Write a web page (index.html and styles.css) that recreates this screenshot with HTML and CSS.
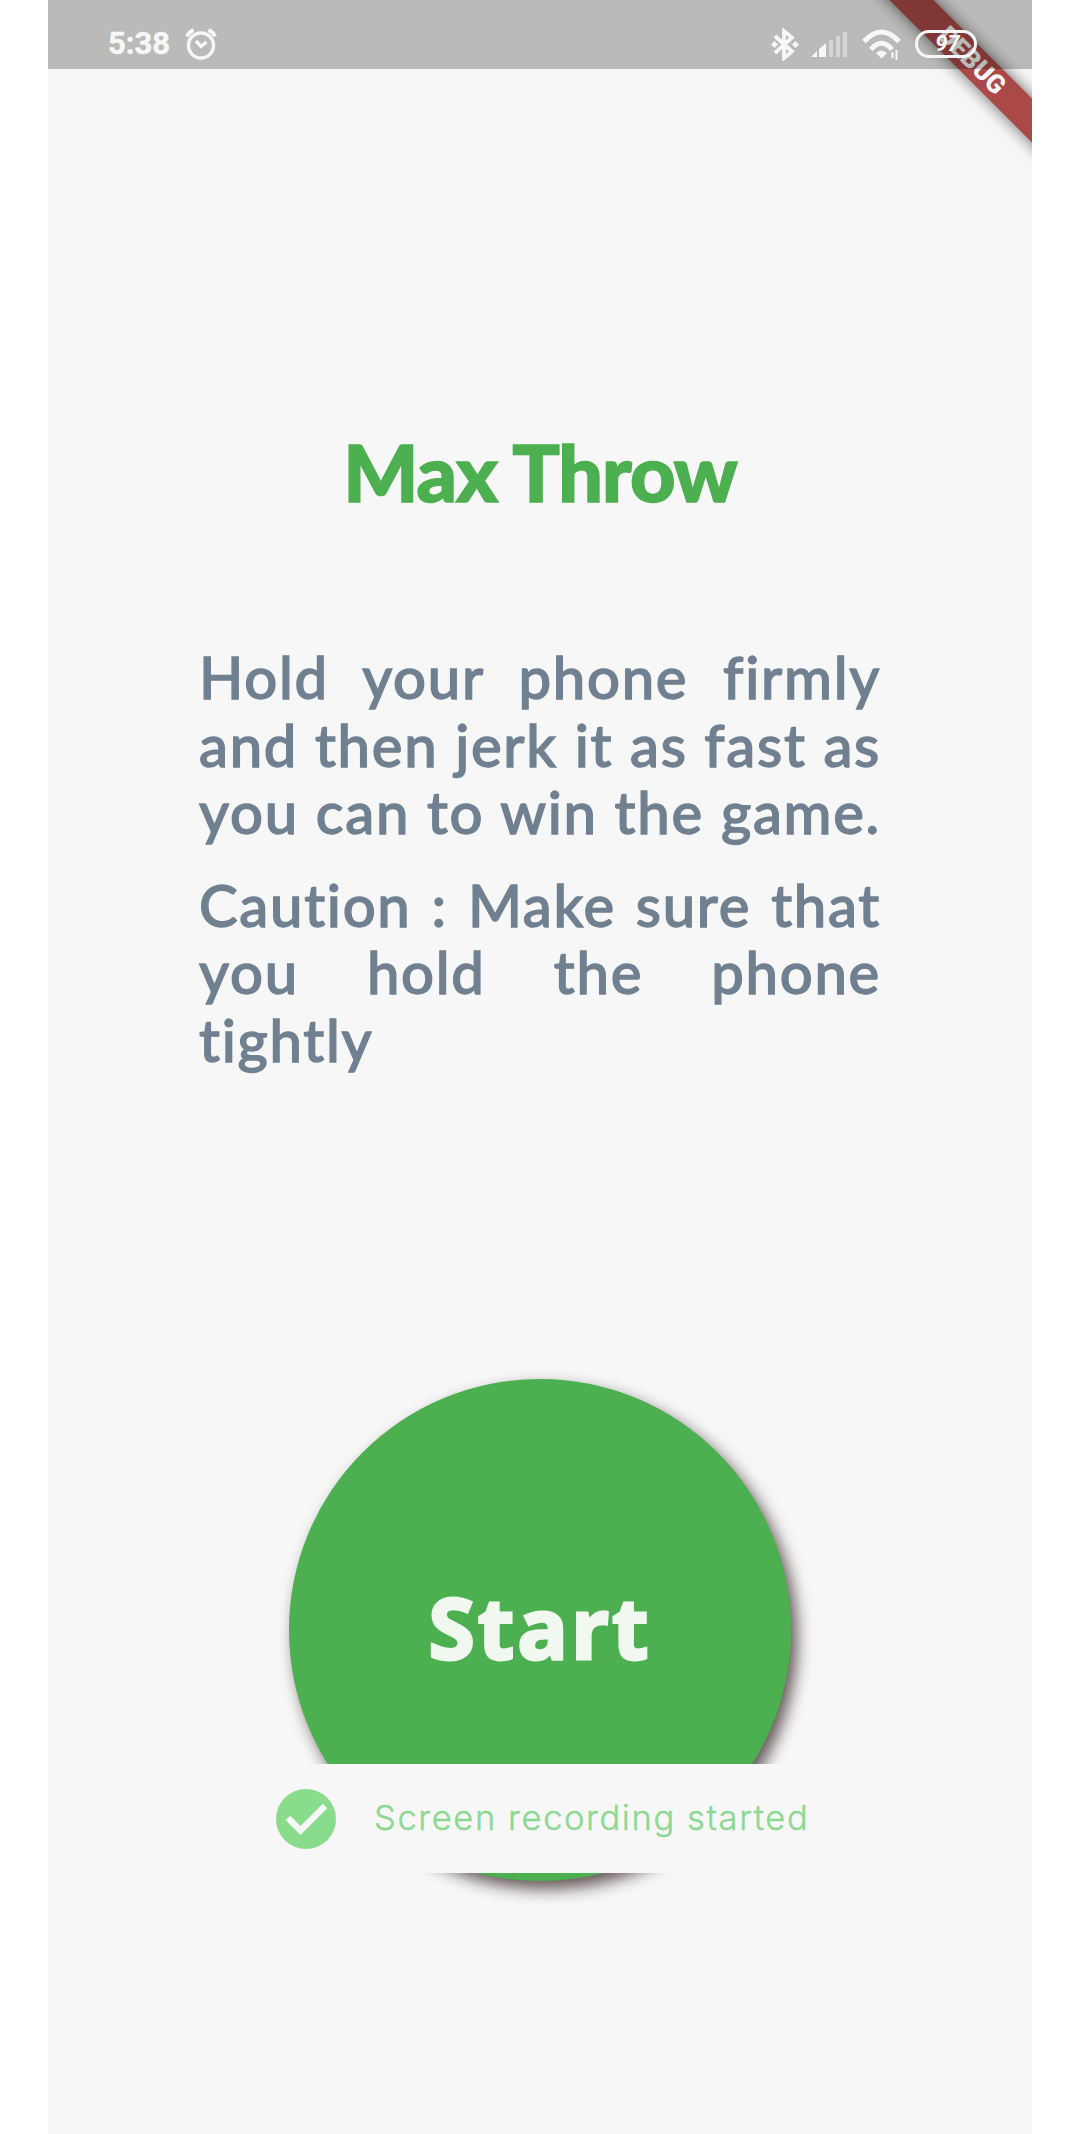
FILE: index.html
```html
<!DOCTYPE html>
<html lang="en">
<head>
<meta charset="utf-8">
<title>Max Throw</title>
<link rel="stylesheet" href="styles.css">
</head>
<body>
<main class="phone">
  <div class="debug-corner"><div class="debug-banner">DEBUG</div></div>
  <header class="status-bar">
    <div class="status-left">
      <span class="clock">5:38</span>
      <svg class="alarm" viewBox="0 0 32 32" fill="none" stroke="#f7f7f7">
        <circle cx="16" cy="17.5" r="12.5" stroke-width="3.400"/>
        <path d="M2 8.500Q4 4 8.500 2M30 8.500Q28 4 23.500 2" stroke-width="4"/>
        <path d="M11 13L16 18.500L21.500 14" stroke-width="3.400"/>
      </svg>
    </div>
    <div class="status-right">
      <svg class="bluetooth" viewBox="0 0 28 33" fill="none" stroke="#f7f7f7">
        <path d="M4 8L21 23.500L13 30V3L21 9.500L4 25" stroke-width="3.800"/>
        <path d="M0 16.500L3.500 13L7 16.500L3.500 20ZM21 16.500L24.500 13L28 16.500L24.500 20Z" fill="#f7f7f7" stroke="none"/>
      </svg>
      <svg class="signal" viewBox="0 0 38 27" fill="#f7f7f7">
        <path d="M0 26L6 20V26ZM8 18L15 12V26H8Z"/>
        <path d="M18 9H22V26H18ZM25 5H29V26H25ZM32 1H36V26H32Z" opacity=".45"/>
      </svg>
      <svg class="wifi" viewBox="0 0 40 31" fill="none" stroke="#f7f7f7" stroke-width="5">
        <path d="M2 12.500Q19.500 -6.500 37 12.500M9 20.500Q19.500 8 30 20.500"/>
        <path d="M14 24Q19.500 19 25 24L19.500 29.500Z" fill="#f7f7f7" stroke="none"/>
        <path d="M30.500 23V29M34.500 21V31" stroke-width="2"/>
      </svg>
      <div class="battery">97</div>
    </div>
  </header>
  <section class="intro">
    <h1><span>Max Throw</span></h1>
    <p><span class="line">Hold your phone firmly</span><span class="line">and then jerk it as fast as</span><span class="line">you can to win the game.</span></p>
    <p><span class="line">Caution : Make sure that</span><span class="line">you hold the phone</span><span class="line last">tightly</span></p>
  </section>
  <button class="start"><span>Start</span></button>
  <div class="toast">
    <svg class="check" viewBox="0 0 60 60"><circle cx="30" cy="30" r="30" fill="#88dc8b"/><path d="M12 29L24.500 41.500L49 17" fill="none" stroke="#f7f7f7" stroke-width="6.500"/></svg>
    <span>Screen recording started</span>
  </div>
</main>
</body>
</html>
```
FILE: styles.css
```css
* { box-sizing: border-box; }
body { margin: 0; background: #fff; }
.phone {
  position: relative;
  width: 984px;
  height: 2134px;
  margin: 0 auto;
  overflow: hidden;
  background: #f7f7f7;
  font-family: Lato, "Open Sans", sans-serif;
}
.status-bar {
  position: relative;
  display: flex;
  justify-content: space-between;
  height: 69px;
  padding: 0 55px 0 60px;
  background: rgba(5, 3, 0, .25);
  color: #f7f7f7;
}
.status-left, .status-right { display: flex; align-items: center; padding-top: 19px; }
.clock { width: 77px; font: 700 31px/32px Roboto, sans-serif; -webkit-text-stroke: .5px #f7f7f7; }
.alarm { width: 32px; height: 32px; }
.bluetooth { width: 28px; height: 33px; margin-right: 12px; }
.signal { width: 38px; height: 27px; margin-right: 13px; }
.wifi { width: 40px; height: 31px; margin-right: 13px; }
.battery {
  width: 62px;
  height: 28px;
  padding-left: 3px;
  border: 3px solid #f7f7f7;
  border-radius: 14px;
  font: italic 700 22px/22px Roboto, sans-serif;
  text-align: center;
}
.debug-corner { position: absolute; top: 0; right: 0; width: 200px; height: 200px; overflow: hidden; }
.debug-banner {
  position: absolute;
  left: 19px;
  top: 44.500px;
  width: 242px;
  height: 31px;
  transform: rotate(45deg);
  background: #ab4848;
  box-shadow: 0 0 16px rgba(0, 0, 0, .6);
  color: #f7f7f7;
  font: 900 26px/31px Roboto, sans-serif;
  text-align: center;
}
.intro { display: flex; flex-direction: column; padding: 353px 151px 0; }
h1 {
  margin: 0 0 121px;
  color: #4caf50;
  font-size: 79px;
  font-weight: 900;
  line-height: 100px;
  letter-spacing: -1px;
  text-align: center;
  white-space: nowrap;
  -webkit-text-stroke: 1.500px #4caf50;
}
p {
  margin: 0 0 25px;
  color: #708090;
  font-size: 58px;
  font-weight: 500;
  line-height: 67.500px;
  letter-spacing: 1.700px;
  -webkit-text-stroke: 1.300px #708090;
}
.line { display: block; text-align-last: justify; white-space: nowrap; }
.last { text-align-last: left; }
.start {
  display: block;
  width: 502px;
  height: 502px;
  margin: 281px auto 0;
  padding: 0 0 6px;
  border: 0;
  border-radius: 50%;
  background: #4caf50;
  box-shadow: 6px 8px 16px rgba(20, 0, 0, .65);
  color: #f0f8f0;
  font: 700 84px/100px "Open Sans", sans-serif;
  letter-spacing: 3px;
  -webkit-text-stroke: 3px #f0f8f0;
  stroke-linejoin: round;
}
.toast {
  position: absolute;
  left: 192px;
  top: 1764px;
  display: flex;
  align-items: center;
  gap: 38px;
  width: 600px;
  height: 109px;
  padding-left: 36px;
  background: #f7f7f7;
  color: #8dd891;
  font: 300 34.500px/50px Inter, sans-serif;
  letter-spacing: 1.600px;
  white-space: nowrap;
  -webkit-text-stroke: .4px #8dd891;
}
.toast span { padding-bottom: 2px; }
.check { width: 60px; height: 60px; }
```
